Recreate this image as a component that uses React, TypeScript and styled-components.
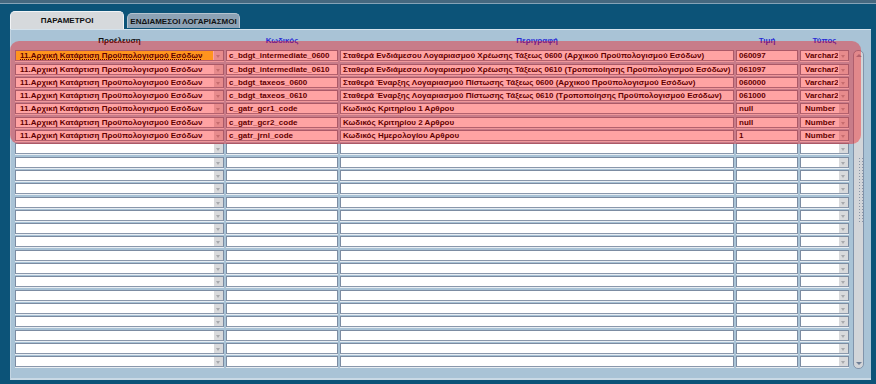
import React from 'react';
import styled, { createGlobalStyle } from 'styled-components';

const GlobalStyle = createGlobalStyle`
  html, body {
    margin: 0;
    padding: 0;
    background: #0c5378;
    font-family: "Liberation Sans", Arial, sans-serif;
  }
`;

type Row = {
  source: string;
  code: string;
  desc: string;
  value: string;
  type: string;
};

const SOURCE = '11.Αρχική Κατάρτιση Προϋπολογισμού Εσόδων';

const rows: Row[] = [
  { source: SOURCE, code: 'c_bdgt_intermediate_0600', desc: 'Σταθερά Ενδιάμεσου Λογαριασμού Χρέωσης Τάξεως 0600 (Αρχικού Προϋπολογισμού Εσόδων)', value: '060097', type: 'Varchar2' },
  { source: SOURCE, code: 'c_bdgt_intermediate_0610', desc: 'Σταθερά Ενδιάμεσου Λογαριασμού Χρέωσης Τάξεως 0610 (Τροποποίησης Προϋπολογισμού Εσόδων)', value: '061097', type: 'Varchar2' },
  { source: SOURCE, code: 'c_bdgt_taxeos_0600', desc: 'Σταθερά Έναρξης Λογαριασμού Πίστωσης Τάξεως 0600 (Αρχικού Προϋπολογισμού Εσόδων)', value: '060000', type: 'Varchar2' },
  { source: SOURCE, code: 'c_bdgt_taxeos_0610', desc: 'Σταθερά Έναρξης Λογαριασμού Πίστωσης Τάξεως 0610 (Τροποποίησης Προϋπολογισμού Εσόδων)', value: '061000', type: 'Varchar2' },
  { source: SOURCE, code: 'c_gatr_gcr1_code', desc: 'Κωδικός Κριτηρίου 1 Αρθρου', value: 'null', type: 'Number' },
  { source: SOURCE, code: 'c_gatr_gcr2_code', desc: 'Κωδικός Κριτηρίου 2 Αρθρου', value: 'null', type: 'Number' },
  { source: SOURCE, code: 'c_gatr_jrnl_code', desc: 'Κωδικός Ημερολογίου Αρθρου', value: '1', type: 'Number' },
];

const EMPTY_ROWS = 17;

const App: React.FC = () => {
  const blanks = Array.from({ length: EMPTY_ROWS }, (_, i) => i);

  return (
    <>
      <GlobalStyle />
      <TopStrip />
      <Window>
        <TabStrip>
          <Tab $active>ΠΑΡΑΜΕΤΡΟΙ</Tab>
          <Tab>ΕΝΔΙΑΜΕΣΟΙ ΛΟΓΑΡΙΑΣΜΟΙ</Tab>
        </TabStrip>

        <Panel>
          <Body>
            <Table>
              <HeadCell $dark>Προέλευση</HeadCell>
              <HeadCell>Κωδικός</HeadCell>
              <HeadCell>Περιγραφή</HeadCell>
              <HeadCell>Τιμή</HeadCell>
              <HeadCell>Τύπος</HeadCell>

              {rows.map((r, i) => (
                <React.Fragment key={i}>
                  <Select $focused={i === 0}>
                    <SelectText $focused={i === 0}>{r.source}</SelectText>
                    <DropButton />
                  </Select>
                  <Field>{r.code}</Field>
                  <Field>{r.desc}</Field>
                  <Field>{r.value}</Field>
                  <Select>
                    <SelectText>{r.type}</SelectText>
                    <DropButton />
                  </Select>
                </React.Fragment>
              ))}

              {blanks.map((i) => (
                <React.Fragment key={'b' + i}>
                  <Select>
                    <SelectText />
                    <DropButton />
                  </Select>
                  <Field />
                  <Field />
                  <Field />
                  <Select>
                    <SelectText />
                    <DropButton />
                  </Select>
                </React.Fragment>
              ))}
            </Table>

            <ScrollBar>
              <ScrollArrow $up />
              <Grip />
              <ScrollArrow />
            </ScrollBar>
          </Body>

          <Highlight />
        </Panel>
      </Window>
    </>
  );
};

export default App;

/* Styling */
const TopStrip = styled.div`
  height: 3px;
  background: #46687f;
  border-bottom: 1px solid #86a3b7;
`;

const Window = styled.div`
  padding: 7px 5px 0 10px;
  width: 861px;
`;

const TabStrip = styled.div`
  display: flex;
  align-items: flex-end;
  gap: 3px;
  height: 18px;
`;

const Tab = styled.div<{ $active?: boolean }>`
  display: flex;
  align-items: center;
  justify-content: center;
  box-sizing: border-box;
  width: ${(p) => (p.$active ? '114px' : '113px')};
  height: ${(p) => (p.$active ? '18px' : '15px')};
  margin-bottom: ${(p) => (p.$active ? '0' : '1px')};
  background: ${(p) => (p.$active ? '#d6d9dc' : '#8da2b5')};
  border: 1px solid ${(p) => (p.$active ? '#f2f4f6' : '#b5c4d0')};
  border-bottom: none;
  border-radius: 5px 5px 0 0;
  font-size: 8px;
  font-weight: bold;
  color: #111;
  white-space: nowrap;
`;

const Panel = styled.div`
  position: relative;
  box-sizing: border-box;
  height: 351px;
  background: #a9c3d6;
  border-top: 1px solid #d4e2ec;
  border-left: 1px solid #c4d6e3;
  border-bottom: 2px solid #c9d9e5;
  padding: 0 0 0 4px;
`;

const Body = styled.div`
  display: flex;
  gap: 4px;
`;

const Table = styled.div`
  display: grid;
  grid-template-columns: 209px 112px 394px 62px 49px;
  grid-template-rows: 18px;
  grid-auto-rows: 11px;
  column-gap: 2px;
  row-gap: 2.3px;
`;

const HeadCell = styled.div<{ $dark?: boolean }>`
  display: flex;
  align-items: flex-end;
  justify-content: center;
  padding-bottom: 3px;
  font-size: 8px;
  font-weight: bold;
  color: ${(p) => (p.$dark ? '#111' : '#2b2bd4')};
  white-space: nowrap;
`;

const Field = styled.div`
  box-sizing: border-box;
  height: 11px;
  background: #fff;
  border: 1px solid #7c8ca2;
  border-bottom-color: #8a98ac;
  box-shadow: 0 1px 0 #e8eef3;
  padding: 0 2px;
  font-size: 8px;
  font-weight: bold;
  line-height: 9px;
  color: #000;
  white-space: nowrap;
  overflow: hidden;
`;

const Select = styled(Field)<{ $focused?: boolean }>`
  display: flex;
  padding: 0;
  background: ${(p) => (p.$focused ? '#ffe830' : '#fff')};
`;

const SelectText = styled.div<{ $focused?: boolean }>`
  flex: 1;
  padding: 0 0 0 4px;
  overflow: hidden;
  text-decoration: ${(p) => (p.$focused ? 'underline dotted' : 'none')};
  text-underline-offset: 1px;
`;

const DropButton = styled.div`
  position: relative;
  width: 9px;
  flex: none;
  background: #d9dadc;
  border-left: 1px solid #fff;
  &::after {
    content: '';
    position: absolute;
    left: 2px;
    top: 4px;
    border-left: 2.5px solid transparent;
    border-right: 2.5px solid transparent;
    border-top: 3px solid #a7a9ad;
  }
`;

const ScrollBar = styled.div`
  display: flex;
  flex-direction: column;
  justify-content: space-between;
  align-items: center;
  box-sizing: border-box;
  width: 11px;
  height: 319px;
  margin-top: 20px;
  background: #d2d5d9;
  border: 1px solid #8194ab;
  border-radius: 5px;
  padding: 3px 0;
`;

const ScrollArrow = styled.div<{ $up?: boolean }>`
  width: 0;
  height: 0;
  border-left: 3px solid transparent;
  border-right: 3px solid transparent;
  ${(p) =>
    p.$up
      ? 'border-bottom: 3px solid #8a97a8;'
      : 'border-top: 3px solid #6f7f96;'}
`;

const Grip = styled.div`
  flex: 1;
  width: 5px;
  margin: 100px 0 140px 3px;
  background-image: radial-gradient(circle, #8a96a6 0.8px, transparent 1px);
  background-size: 3px 3px;
`;

const Highlight = styled.div`
  position: absolute;
  left: -1px;
  top: 11px;
  width: 851px;
  height: 103px;
  border-radius: 9px;
  background: rgba(255, 0, 0, 0.36);
  pointer-events: none;
`;
